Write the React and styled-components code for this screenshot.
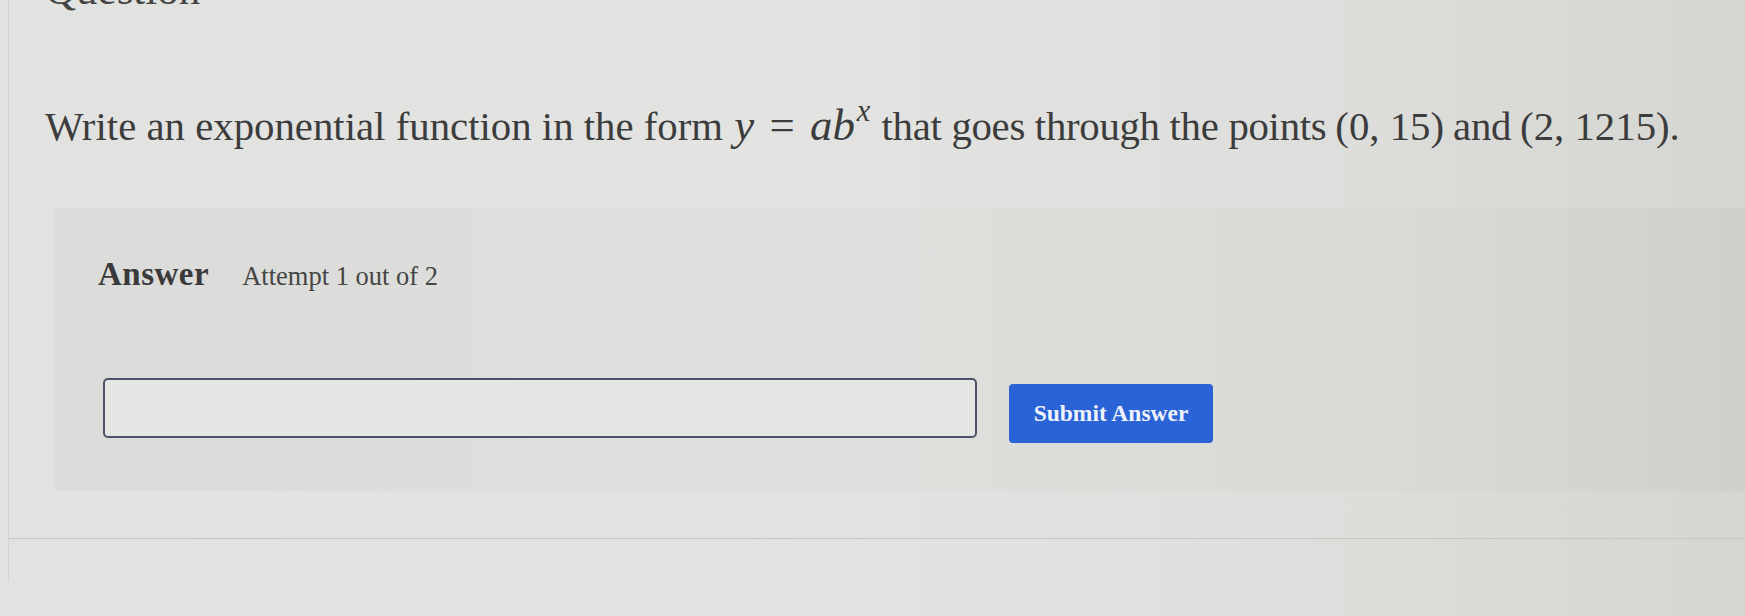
import React from "react";
import styled, { createGlobalStyle } from "styled-components";

const GlobalStyle = createGlobalStyle`
  html, body {
    margin: 0;
    padding: 0;
    height: 100%;
    overflow: hidden;
  }
  body {
    background: linear-gradient(90deg, #e2e3e0 0%, #e3e4e2 45%, #dedfdc 75%, #d5d6d1 100%);
    font-family: "Liberation Serif", "Times New Roman", serif;
    color: #464646;
  }
`;

const Page = styled.main`
  min-height: 616px;
  margin-left: 8px;
  padding-left: 36px;
  border-left: 1px solid #d2d3d0;
  box-sizing: border-box;
`;

const Heading = styled.h2`
  margin: -34px 0 0;
  font-size: 43px;
  line-height: 48px;
  font-weight: 400;
  color: #454545;
`;

const Prompt = styled.p`
  margin: 85px 0 0;
  font-size: 40.8px;
  line-height: 52px;
  color: #3c3c3c;
  white-space: nowrap;
`;

const Trail = styled.span`
  letter-spacing: -0.3px;
`;

const Math = styled.span`
  font-family: "Liberation Serif", "Times New Roman", serif;
  font-size: ${(p) => p.$scale || "1em"};
  letter-spacing: 0;
  margin: 0 ${(p) => p.$space || "0.12em"};
`;

const Var = styled.i`
  font-style: italic;
`;

const Sup = styled.sup`
  font-size: 0.68em;
  font-style: italic;
  vertical-align: 0.62em;
  line-height: 0;
  margin-left: 0.06em;
`;

const Rel = styled.span`
  margin: 0 0.34em;
`;

const AnswerPanel = styled.section`
  margin: 55px 0 0 10px;
  padding: 48px 0 48px 43px;
  background: linear-gradient(90deg, #dbdcd9 0%, #dfe0dd 45%, #d9dad6 80%, #cfd0cb 100%);
`;

const LabelRow = styled.div`
  display: flex;
  align-items: baseline;
  gap: 33px;
  line-height: 36px;
`;

const Label = styled.span`
  font-size: 33px;
  font-weight: 700;
  letter-spacing: 0.5px;
  color: #3a3a3a;
`;

const Attempt = styled.span`
  font-size: 26.5px;
  color: #454545;
`;

const InputRow = styled.div`
  display: flex;
  align-items: center;
  gap: 32px;
  margin: 78px 0 0 5px;
`;

const AnswerInput = styled.input`
  width: 874px;
  height: 60px;
  box-sizing: border-box;
  border: 2px solid #4c5266;
  border-radius: 5px;
  background: #e5e6e4;
  outline: none;
  font: inherit;
`;

const SubmitButton = styled.button`
  width: 204px;
  height: 59px;
  margin-top: 12px;
  border: none;
  border-radius: 4px;
  background: #2a63d6;
  color: #eef2fb;
  font-family: "Liberation Serif", "Times New Roman", serif;
  font-size: 23.5px;
  font-weight: 700;
  cursor: pointer;
`;

const Divider = styled.hr`
  margin: 47px 0 0 -36px;
  border: none;
  height: 1px;
  background: #c6c7c3;
`;

export default function App() {
  return (
    <>
      <GlobalStyle />
      <Page>
        <Heading>Question</Heading>
        <Prompt>
          Write an exponential function in the form
          <Math $scale="1.1em" $space="0.25em">
            <Var>y</Var>
            <Rel>=</Rel>
            <Var>ab</Var>
            <Sup>x</Sup>
          </Math>
          <Trail>
            that goes through the points
            <Math $space="0.22em">(0, 15)</Math>
            and
            <Math $space="0.22em">(2, 1215).</Math>
          </Trail>
        </Prompt>
        <AnswerPanel>
          <LabelRow>
            <Label>Answer</Label>
            <Attempt>Attempt 1 out of 2</Attempt>
          </LabelRow>
          <InputRow>
            <AnswerInput type="text" aria-label="Answer" />
            <SubmitButton type="button">Submit Answer</SubmitButton>
          </InputRow>
        </AnswerPanel>
        <Divider />
      </Page>
    </>
  );
}
